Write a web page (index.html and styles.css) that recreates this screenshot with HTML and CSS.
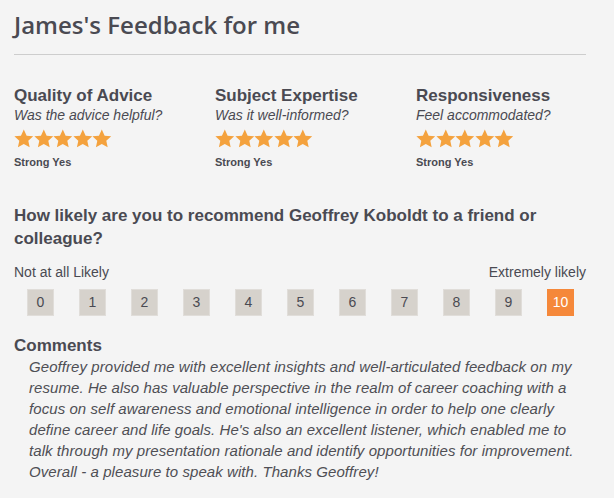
FILE: index.html
```html
<!DOCTYPE html>
<html>
<head>
<meta charset="utf-8">
<link rel="stylesheet" href="styles.css">
</head>
<body>
<div class="page">
  <h1 class="title">James's Feedback for me</h1>
  <div class="rule"></div>

  <div class="ratings">
    <div class="rating">
      <div class="r-title">Quality of Advice</div>
      <div class="r-sub">Was the advice helpful?</div>
      <div class="stars">
        <svg class="star" viewBox="0 0 20 20"><path d="M10 0.6l2.9 6.2 6.7 0.7-5 4.6 1.4 6.6L10 15.3l-6 3.4 1.4-6.6-5-4.6 6.7-0.7z"/></svg>
        <svg class="star" viewBox="0 0 20 20"><path d="M10 0.6l2.9 6.2 6.7 0.7-5 4.6 1.4 6.6L10 15.3l-6 3.4 1.4-6.6-5-4.6 6.7-0.7z"/></svg>
        <svg class="star" viewBox="0 0 20 20"><path d="M10 0.6l2.9 6.2 6.7 0.7-5 4.6 1.4 6.6L10 15.3l-6 3.4 1.4-6.6-5-4.6 6.7-0.7z"/></svg>
        <svg class="star" viewBox="0 0 20 20"><path d="M10 0.6l2.9 6.2 6.7 0.7-5 4.6 1.4 6.6L10 15.3l-6 3.4 1.4-6.6-5-4.6 6.7-0.7z"/></svg>
        <svg class="star" viewBox="0 0 20 20"><path d="M10 0.6l2.9 6.2 6.7 0.7-5 4.6 1.4 6.6L10 15.3l-6 3.4 1.4-6.6-5-4.6 6.7-0.7z"/></svg>
      </div>
      <div class="r-label">Strong Yes</div>
    </div>
    <div class="rating">
      <div class="r-title">Subject Expertise</div>
      <div class="r-sub">Was it well-informed?</div>
      <div class="stars">
        <svg class="star" viewBox="0 0 20 20"><path d="M10 0.6l2.9 6.2 6.7 0.7-5 4.6 1.4 6.6L10 15.3l-6 3.4 1.4-6.6-5-4.6 6.7-0.7z"/></svg>
        <svg class="star" viewBox="0 0 20 20"><path d="M10 0.6l2.9 6.2 6.7 0.7-5 4.6 1.4 6.6L10 15.3l-6 3.4 1.4-6.6-5-4.6 6.7-0.7z"/></svg>
        <svg class="star" viewBox="0 0 20 20"><path d="M10 0.6l2.9 6.2 6.7 0.7-5 4.6 1.4 6.6L10 15.3l-6 3.4 1.4-6.6-5-4.6 6.7-0.7z"/></svg>
        <svg class="star" viewBox="0 0 20 20"><path d="M10 0.6l2.9 6.2 6.7 0.7-5 4.6 1.4 6.6L10 15.3l-6 3.4 1.4-6.6-5-4.6 6.7-0.7z"/></svg>
        <svg class="star" viewBox="0 0 20 20"><path d="M10 0.6l2.9 6.2 6.7 0.7-5 4.6 1.4 6.6L10 15.3l-6 3.4 1.4-6.6-5-4.6 6.7-0.7z"/></svg>
      </div>
      <div class="r-label">Strong Yes</div>
    </div>
    <div class="rating">
      <div class="r-title">Responsiveness</div>
      <div class="r-sub">Feel accommodated?</div>
      <div class="stars">
        <svg class="star" viewBox="0 0 20 20"><path d="M10 0.6l2.9 6.2 6.7 0.7-5 4.6 1.4 6.6L10 15.3l-6 3.4 1.4-6.6-5-4.6 6.7-0.7z"/></svg>
        <svg class="star" viewBox="0 0 20 20"><path d="M10 0.6l2.9 6.2 6.7 0.7-5 4.6 1.4 6.6L10 15.3l-6 3.4 1.4-6.6-5-4.6 6.7-0.7z"/></svg>
        <svg class="star" viewBox="0 0 20 20"><path d="M10 0.6l2.9 6.2 6.7 0.7-5 4.6 1.4 6.6L10 15.3l-6 3.4 1.4-6.6-5-4.6 6.7-0.7z"/></svg>
        <svg class="star" viewBox="0 0 20 20"><path d="M10 0.6l2.9 6.2 6.7 0.7-5 4.6 1.4 6.6L10 15.3l-6 3.4 1.4-6.6-5-4.6 6.7-0.7z"/></svg>
        <svg class="star" viewBox="0 0 20 20"><path d="M10 0.6l2.9 6.2 6.7 0.7-5 4.6 1.4 6.6L10 15.3l-6 3.4 1.4-6.6-5-4.6 6.7-0.7z"/></svg>
      </div>
      <div class="r-label">Strong Yes</div>
    </div>
  </div>

  <div class="question">How likely are you to recommend Geoffrey Koboldt to a friend or colleague?</div>

  <div class="scale-labels">
    <span>Not at all Likely</span>
    <span>Extremely likely</span>
  </div>
  <div class="scale">
    <div class="box">0</div>
    <div class="box">1</div>
    <div class="box">2</div>
    <div class="box">3</div>
    <div class="box">4</div>
    <div class="box">5</div>
    <div class="box">6</div>
    <div class="box">7</div>
    <div class="box">8</div>
    <div class="box">9</div>
    <div class="box selected">10</div>
  </div>

  <div class="c-title">Comments</div>
  <div class="comment">Geoffrey provided me with excellent insights and well-articulated feedback on my resume. He also has valuable perspective in the realm of career coaching with a focus on self awareness and emotional intelligence in order to help one clearly define career and life goals. He's also an excellent listener, which enabled me to talk through my presentation rationale and identify opportunities for improvement. Overall - a pleasure to speak with. Thanks Geoffrey!</div>
</div>
</body>
</html>
```

FILE: styles.css
```css
html, body {
  margin: 0;
  padding: 0;
  background: #f4f4f4;
}
body {
  font-family: "Liberation Sans", Arial, sans-serif;
  color: #4a4a52;
}
.page {
  width: 572px;
  padding: 0 28px 0 14px;
}
.title {
  font-family: "Open Sans", sans-serif;
  font-weight: 600;
  font-size: 24px;
  line-height: 32px;
  margin: 9px 0 0 0;
  letter-spacing: 0;
  color: #4a4a52;
}
.rule {
  height: 1px;
  background: #cdcdcd;
  margin-top: 13px;
}
.ratings {
  display: grid;
  grid-template-columns: 201px 201px 1fr;
  margin-top: 31px;
}
.r-title {
  font-weight: bold;
  font-size: 17px;
  line-height: 20px;
}
.r-sub {
  font-style: italic;
  font-size: 14px;
  line-height: 19px;
}
.stars {
  display: flex;
  margin-top: 4px;
  height: 19.6px;
}
.star {
  width: 19.6px;
  height: 19.6px;
  fill: #f4a23e;
}
.r-label {
  font-weight: bold;
  font-size: 11px;
  line-height: 14px;
  margin-top: 6px;
}
.question {
  font-weight: bold;
  font-size: 17px;
  line-height: 23px;
  margin-top: 35px;
}
.scale-labels {
  display: flex;
  justify-content: space-between;
  font-size: 14px;
  line-height: 18px;
  margin-top: 13.5px;
}
.scale {
  display: flex;
  gap: 25px;
  padding-left: 13px;
  margin-top: 8px;
}
.box {
  width: 25px;
  height: 25px;
  border: 1px solid #e0ddd9;
  background: #d6d2cc;
  font-size: 14px;
  line-height: 25px;
  text-align: center;
  color: #4a4a52;
}
.box.selected {
  background: #f5883a;
  border-color: #f5883a;
  color: #fff;
}
.c-title {
  font-weight: bold;
  font-size: 17px;
  line-height: 20px;
  margin-top: 19.5px;
}
.comment {
  font-style: italic;
  font-size: 15px;
  letter-spacing: 0.07px;
  line-height: 21px;
  padding-left: 15px;
  color: #4f4f55;
}
```
